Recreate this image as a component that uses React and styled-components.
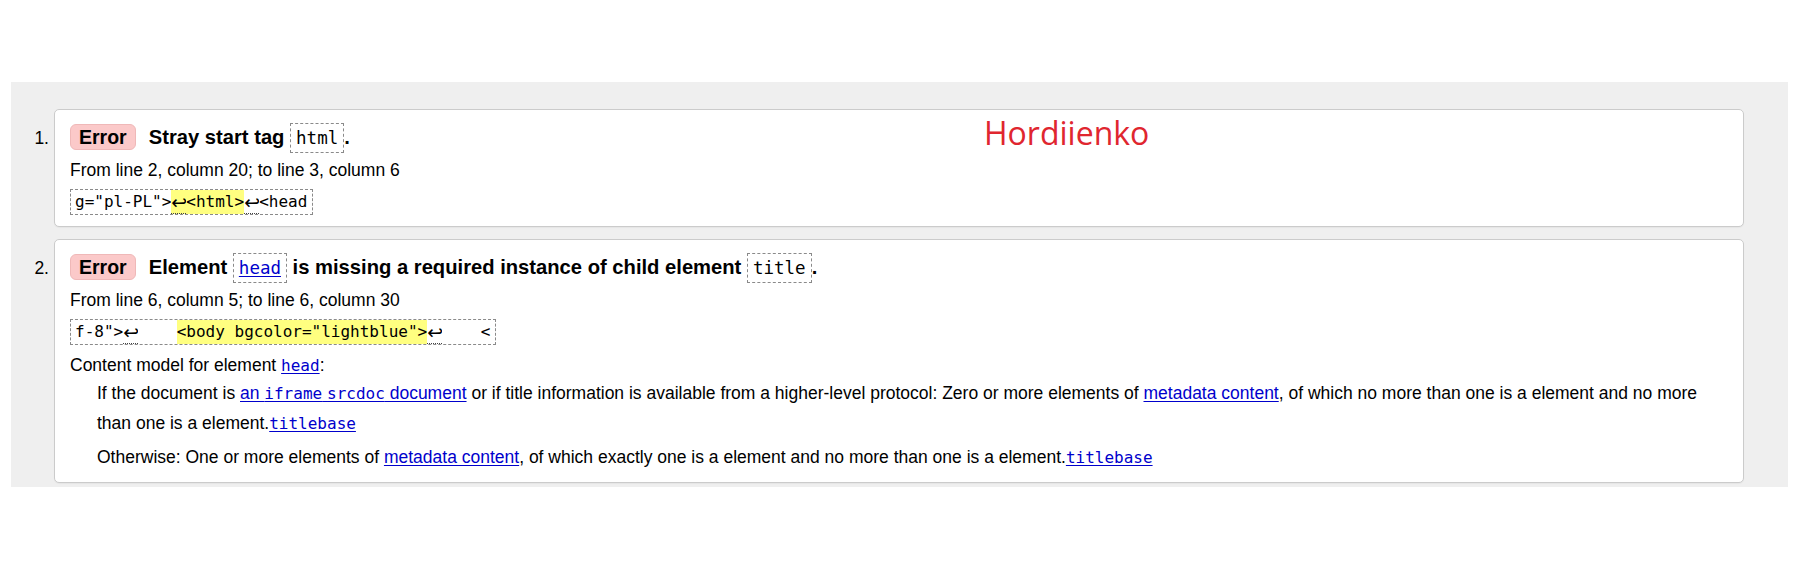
import React from 'react';
import styled, { createGlobalStyle } from 'styled-components';

const GlobalStyle = createGlobalStyle`
	html, body {
		margin: 0;
		padding: 0;
		background: #ffffff;
	}
	body {
		font-family: "Liberation Sans", Arial, sans-serif;
		font-size: 17.5px;
		color: #000000;
	}
`;

const MONO = `"DejaVu Sans Mono", "Liberation Mono", monospace`;

const Page = styled.div`
	position: relative;
	padding: 82px 12px 0 11px;
`;

const Board = styled.ol`
	margin: 0;
	padding: 27px 44px 4px 0;
	list-style: none;
	background: #efefef;
	display: flex;
	flex-direction: column;
	gap: 12px;
`;

const Item = styled.li`
	display: flex;
	align-items: flex-start;
`;

const Num = styled.span`
	flex: 0 0 43px;
	box-sizing: border-box;
	padding: 14px 5px 0 0;
	text-align: right;
	line-height: 30px;
	font-size: 17.5px;
`;

const Card = styled.div`
	flex: 1;
	background: #ffffff;
	border: 1px solid #cbcbcb;
	border-radius: 5px;
	padding: 12px 16px ${p => p.$bottom || 11}px 15px;
	box-shadow: 0 1px 1px rgba(0, 0, 0, 0.04);
`;

const TitleRow = styled.p`
	margin: 0;
	display: flex;
	align-items: center;
	height: 30px;
`;

const Badge = styled.strong`
	display: inline-block;
	box-sizing: border-box;
	height: 26px;
	line-height: 24px;
	padding: 0 8px;
	margin-right: 13px;
	font-size: 19.5px;
	font-weight: bold;
	background: #fbc9c9;
	border: 1px solid #efb8b8;
	border-radius: 6px;
`;

const Message = styled.span`
	font-size: 20.2px;
	font-weight: bold;
	line-height: 30px;
	white-space: nowrap;
`;

const Code = styled.code`
	display: inline-block;
	font-family: ${MONO};
	font-weight: normal;
	font-size: 17.5px;
	line-height: 28px;
	padding: 0 5px;
	border: 1px dashed #8a8a8a;
`;

const Link = styled.a`
	color: #0000cc;
	text-decoration: underline;
	text-underline-offset: 2px;
`;

const Location = styled.p`
	margin: 6px 0 0;
	line-height: 24px;
	font-size: 17.5px;
`;

const Extract = styled.p`
	margin: 7px 0 0;
	display: inline-block;
	font-family: ${MONO};
	font-size: 16px;
	line-height: 24px;
	white-space: pre;
	padding: 0 5px 0 4px;
	border: 1px dashed #8a8a8a;
	vertical-align: top;
`;

const Mark = styled.span`
	display: inline-block;
	background: #ffff80;
	line-height: 24px;
	vertical-align: top;
`;

const Lf = styled.span`
	display: inline-block;
	width: 15px;
	height: 23px;
	line-height: 24px;
	font-family: "DejaVu Sans", sans-serif;
	font-size: 19px;
	border-bottom: 1px dotted #444444;
	vertical-align: top;
	overflow: hidden;
`;

const ModelHead = styled.p`
	margin: 8px 0 0;
	line-height: 24px;
`;

const ModelBody = styled.div`
	margin: 1px 0 0 27px;
	display: flex;
	flex-direction: column;
	gap: 4px;
`;

const ModelPara = styled.p`
	margin: 0;
	line-height: 30px;
`;

const Mono = styled.code`
	font-family: ${MONO};
	font-size: 16px;
	line-height: 1;
`;

const Signature = styled.div`
	position: absolute;
	left: 984px;
	top: 117px;
	font-family: "Open Sans", "Noto Sans", sans-serif;
	font-size: 32px;
	line-height: 1;
	color: #e0262f;
`;

function Lines({ children }) {
	return <Extract>{children}</Extract>;
}

export default function App() {
	return (
		<Page>
			<GlobalStyle />
			<Board>
				<Item>
					<Num>1.</Num>
					<Card>
						<TitleRow>
							<Badge>Error</Badge>
							<Message>
								Stray start tag <Code>html</Code>.
							</Message>
						</TitleRow>
						<Location>From line 2, column 20; to line 3, column 6</Location>
						<Lines>
							g="pl-PL"&gt;<Mark><Lf>↩</Lf>&lt;html&gt;</Mark><Lf>↩</Lf>&lt;head
						</Lines>
					</Card>
				</Item>
				<Item>
					<Num>2.</Num>
					<Card $bottom={10}>
						<TitleRow>
							<Badge>Error</Badge>
							<Message>
								Element <Code><Link href="#head">head</Link></Code> is missing a required
								instance of child element <Code>title</Code>.
							</Message>
						</TitleRow>
						<Location>From line 6, column 5; to line 6, column 30</Location>
						<Lines>
							f-8"&gt;<Lf>↩</Lf>{'    '}<Mark>&lt;body bgcolor="lightblue"&gt;</Mark><Lf>↩</Lf>{'    <'}
						</Lines>
						<ModelHead>
							Content model for element <Link href="#head"><Mono>head</Mono></Link>:
						</ModelHead>
						<ModelBody>
							<ModelPara>
								If the document is{' '}
								<Link href="#srcdoc">an <Mono>iframe</Mono> <Mono>srcdoc</Mono> document</Link>{' '}
								or if title information is available from a higher-level protocol: Zero or more
								elements of <Link href="#metadata">metadata content</Link>, of which no more than
								one is a element and no more than one is a element.
								<Link href="#title"><Mono>titlebase</Mono></Link>
							</ModelPara>
							<ModelPara>
								Otherwise: One or more elements of <Link href="#metadata">metadata content</Link>,
								of which exactly one is a element and no more than one is a element.
								<Link href="#title"><Mono>titlebase</Mono></Link>
							</ModelPara>
						</ModelBody>
					</Card>
				</Item>
			</Board>
			<Signature>Hordiienko</Signature>
		</Page>
	);
}
